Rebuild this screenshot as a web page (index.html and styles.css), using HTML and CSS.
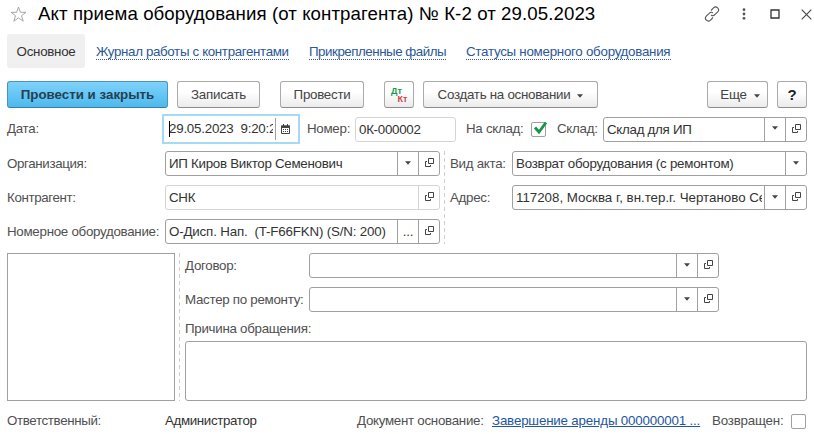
FILE: index.html
```
<!DOCTYPE html>
<html lang="ru">
<head>
<meta charset="utf-8">
<title>Акт приема оборудования</title>
<link rel="stylesheet" href="styles.css">
</head>
<body>
<svg width="0" height="0" class="defs">
  <symbol id="open" viewBox="0 0 9 9"><path d="M3.5.5h5v5h-5zM2 3.5H.5v5h5V7" fill="none" stroke="#444"/></symbol>
  <symbol id="down" viewBox="0 0 6 4"><path d="M0 .3h6L3 3.7z" fill="#444"/></symbol>
</svg>
<div class="window">
  <header class="title-bar">
    <svg class="star" width="17" height="17" viewBox="0 0 17 17"><path d="M8.5 1l1.9 5.3h5.6l-4.5 3.4 1.7 5.5-4.7-3.3-4.7 3.3 1.7-5.5L1 6.300h5.600z" fill="none" stroke="#a5a5a5"/></svg>
    <h1><span class="t-title">Акт приема оборудования (от контрагента) № К-2 от 29.05.2023</span></h1>
    <div class="window-tools">
      <svg width="16" height="16" viewBox="0 0 16 16" fill="none" stroke="#555" stroke-width="1.1"><path d="M7 4.500l2.500-2.600a2.800 2.800 0 0 1 4.200 4L10.800 8.700a2.700 2.700 0 0 1-3.700.3M9 11.500l-2.500 2.600a2.800 2.800 0 0 1-4.200-4L5.200 7.300a2.700 2.700 0 0 1 3.700-.3"/></svg>
      <svg width="4" height="12" viewBox="0 0 4 12" fill="#555"><circle cx="2" cy="1.700" r="1.400"/><circle cx="2" cy="6" r="1.400"/><circle cx="2" cy="10.300" r="1.400"/></svg>
      <svg width="10" height="10" viewBox="0 0 10 10"><path d="M1 1h8v8H1z" fill="none" stroke="#333" stroke-width="1.300"/></svg>
      <svg width="11" height="11" viewBox="0 0 11 11"><path d="M.7.7l9.600 9.600M10.300.7L.7 10.300" stroke="#444" stroke-width="1.100"/></svg>
    </div>
  </header>

  <nav class="tabs">
    <span class="tab">Основное</span>
    <a class="link-1">Журнал работы с контрагентами</a>
    <a class="link-2">Прикрепленные файлы</a>
    <a class="link-3">Статусы номерного оборудования</a>
  </nav>

  <div class="toolbar">
    <button class="btn primary">Провести и закрыть</button>
    <button class="btn save">Записать</button>
    <button class="btn post">Провести</button>
    <button class="btn dtkt"><span class="dt">Дт</span><span class="kt">Кт</span></button>
    <button class="btn create"><span>Создать на основании</span><svg width="6" height="4"><use href="#down"/></svg></button>
    <button class="btn more"><span>Еще</span><svg width="6" height="4"><use href="#down"/></svg></button>
    <button class="btn help">?</button>
  </div>

  <div class="row first">
    <label class="main-label">Дата:</label>
    <div class="date-field"><i class="caret"></i><span class="date-value">29.05.2023&nbsp; 9:20:2</span>
      <span class="calendar"><svg width="9" height="10" viewBox="0 0 9 10"><path d="M.5 2h8v7.500h-8z" fill="none" stroke="#444"/><path d="M0 1.500h9V4H0zM2 0h1v2H2zM6 0h1v2H6z" fill="#444"/><path d="M2 5.500h5M2 7.500h5" stroke="#444" stroke-dasharray="1 1"/></svg></span>
    </div>
    <label class="number-label">Номер:</label>
    <div class="field light number"><span class="value">0К-000002</span></div>
    <label class="instock-label">На склад:</label>
    <span class="check"><svg class="tick" width="15" height="14" viewBox="0 0 15 14"><path d="M2 6.500l4 4.500L13 1.500" fill="none" stroke="#12964a" stroke-width="2.800"/></svg></span>
    <label class="stock-label">Склад:</label>
    <div class="field stock"><span class="value">Склад для ИП</span><span class="act"><svg width="6" height="4"><use href="#down"/></svg></span><span class="act"><svg width="9" height="9"><use href="#open"/></svg></span></div>
  </div>

  <div class="columns">
    <section class="left">
      <div class="row"><label class="main-label wide-text">Организация:</label><div class="field"><span class="value">ИП Киров Виктор Семенович</span><span class="act"><svg width="6" height="4"><use href="#down"/></svg></span><span class="act"><svg width="9" height="9"><use href="#open"/></svg></span></div></div>
      <div class="row"><label class="main-label wide-text">Контрагент:</label><div class="field light"><span class="value">СНК</span><span class="act"><svg width="9" height="9"><use href="#open"/></svg></span></div></div>
      <div class="row"><label class="main-label">Номерное оборудование:</label><div class="field"><span class="value equipment">О-Дисп. Нап.&nbsp; (T-F66FKN) (S/N: 200)</span><span class="act">...</span><span class="act"><svg width="9" height="9"><use href="#open"/></svg></span></div></div>
    </section>
    <i class="divider"></i>
    <section class="right">
      <div class="row"><label class="side-label">Вид акта:</label><div class="field"><span class="value kind">Возврат оборудования (с ремонтом)</span><span class="act"><svg width="6" height="4"><use href="#down"/></svg></span></div></div>
      <div class="row"><label class="side-label">Адрес:</label><div class="field"><span class="value address">117208, Москва г, вн.тер.г. Чертаново Се</span><span class="act"><svg width="6" height="4"><use href="#down"/></svg></span><span class="act"><svg width="9" height="9"><use href="#open"/></svg></span></div></div>
    </section>
  </div>

  <div class="details">
    <div class="image-box"></div>
    <i class="divider"></i>
    <section class="repair">
      <div class="row"><label class="repair-label">Договор:</label><div class="field"><span class="value"></span><span class="act"><svg width="6" height="4"><use href="#down"/></svg></span><span class="act"><svg width="9" height="9"><use href="#open"/></svg></span></div></div>
      <div class="row"><label class="repair-label">Мастер по ремонту:</label><div class="field"><span class="value"></span><span class="act"><svg width="6" height="4"><use href="#down"/></svg></span><span class="act"><svg width="9" height="9"><use href="#open"/></svg></span></div></div>
      <label class="reason-label">Причина обращения:</label>
      <div class="reason"></div>
    </section>
  </div>

  <footer class="footer">
    <label class="main-label wide-text">Ответственный:</label>
    <span class="person">Администратор</span>
    <label class="basis-label">Документ основание:</label>
    <a class="basis">Завершение аренды 000000001 ...</a>
    <label class="returned-label">Возвращен:</label>
    <span class="check"></span>
  </footer>
</div>
</body>
</html>
```
FILE: styles.css
```
* { box-sizing: border-box; }
body { margin: 0; background: #fff; color: #333; font: 13.33px/16px "Liberation Sans", Arial, sans-serif; letter-spacing: -.28px; overflow: hidden; }
.defs { display: block; height: 0; }
.window { width: 814px; height: 434px; padding: 0 7px; }
span, a, label { white-space: nowrap; }
label { color: #505050; flex: none; }
i, svg { display: block; flex: none; }

.title-bar { display: flex; height: 34px; padding: 0 0 6px 3px; align-items: center; }
h1 { margin: 0 0 0 11px; font-size: 18.67px; font-weight: 400; line-height: 24px; letter-spacing: .085px; color: #000; }
.window-tools { display: flex; align-items: center; margin-left: auto; margin-right: -5px; }
.window-tools svg + svg { margin-left: 22px; }
.window-tools svg:nth-child(3) { margin-left: 24px; }
.window-tools svg:nth-child(4) { margin-left: 21px; }

.tabs { display: flex; align-items: center; height: 34px; color: #333; }
.tab { width: 78px; height: 34px; line-height: 35px; text-align: center; background: #f0f0f0; border-radius: 3px; margin-right: 11px; }
.tabs a { color: #2b5797; line-height: 14px; border-bottom: 1px dotted #2b5797; margin-top: 2px; margin-right: 20px; }
.link-1 { width: 193px; letter-spacing: -.345px; }
.link-2 { width: 137px; letter-spacing: -.47px; }
.link-3 { width: 205px; letter-spacing: -.26px; }

.toolbar { display: flex; height: 27px; margin-top: 13px; }
.btn { display: flex; align-items: center; justify-content: center; height: 27px; padding: 0; font: inherit; letter-spacing: -.27px; color: #444; border: 1px solid #aaa; border-bottom-color: #8d8d8d; border-radius: 3px; background: linear-gradient(#fff 40%, #ebebeb); }
.btn svg { margin: 2px 0 0 7px; }
.primary { width: 161px; margin-right: 9px; font-weight: 700; letter-spacing: 0; color: #26404e; background: linear-gradient(#7fd2fb, #4db9ee); border-color: #4a94ba; border-bottom-color: #3b7f9f; }
.save { width: 83px; margin-right: 20px; }
.post { width: 84px; margin-right: 20px; }
.dtkt { flex-direction: column; width: 30px; margin-right: 9px; font: 700 9px/8px "Liberation Sans", Arial, sans-serif; letter-spacing: 0; }
.dt { color: #169a50; margin-left: -5px; }
.kt { color: #cf4444; margin-left: 7px; }
.create { width: 175px; }
.more { width: 61px; margin-left: auto; margin-right: 9px; padding-left: 5px; }
.help { width: 30px; font-weight: 700; font-size: 15px; color: #222; }

.row { display: flex; align-items: center; height: 25px; }
.first { height: 30px; margin-top: 6px; }
.main-label { width: 158px; }
.first .main-label { width: 155px; }
.wide-text, .person { letter-spacing: -.36px; }
.date-field { position: relative; display: flex; align-items: center; width: 138px; height: 30px; border: 2px solid #a5daf5; padding-left: 5px; }
.caret { position: absolute; left: 5px; top: 5px; width: 1px; height: 16px; background: #000; }
.date-value { width: 104px; overflow: hidden; letter-spacing: -.22px; }
.calendar { display: flex; align-items: center; height: 22px; border-left: 1px solid #a0a0a0; padding-left: 5px; margin-left: 2px; }
.number-label { width: 55px; padding-left: 7px; }
.field { display: flex; flex: 1; min-width: 0; height: 25px; border: 1px solid #a0a0a0; border-radius: 3px; }
.value { flex: 1; min-width: 0; overflow: hidden; line-height: 24px; margin: 0 3px; }
.equipment { letter-spacing: -.17px; }
.kind { letter-spacing: -.24px; }
.address { letter-spacing: -.01px; margin-right: 2px; }
.act { display: flex; flex: none; align-items: center; justify-content: center; width: 21px; border-left: 1px solid #a0a0a0; }
.act svg { margin-top: -2px; }
.light, .light .act { border-color: #d5d5d5; }
.number { flex: none; width: 101px; }
.instock-label { width: 75px; padding-left: 10px; }
.check { position: relative; flex: none; width: 15px; height: 15px; border: 1px solid #a0a0a0; border-radius: 2px; }
.tick { position: absolute; left: 1px; top: -2px; }
.stock-label { width: 57px; padding-left: 11px; }

.columns { display: flex; margin-top: 7px; }
.left { width: 433px; }
.row + .row { margin-top: 9px; }
.divider { width: 1px; margin: 0 5px 0 4px; background: repeating-linear-gradient(#d0d0d0 0 4px, transparent 4px 7px); }
.right { flex: 1; min-width: 0; }
.side-label { width: 62px; }

.details { display: flex; height: 148px; margin-top: 9px; }
.image-box { width: 168px; border: 1px solid #a0a0a0; }
.repair { flex: 1; display: flex; flex-direction: column; }
.repair .row { width: 534px; }
.repair-label { width: 124px; }
.reason-label { margin-top: 9px; height: 20px; }
.reason { flex: 1; border: 1px solid #a0a0a0; border-radius: 3px; }
.footer { display: flex; align-items: center; height: 20px; margin-top: 10px; }
.person { width: 192px; }
.basis-label { width: 135px; }
.basis { width: 220px; color: #2456a0; text-decoration: underline; letter-spacing: -.17px; }
.returned-label { width: 79px; letter-spacing: -.2px; }
```
